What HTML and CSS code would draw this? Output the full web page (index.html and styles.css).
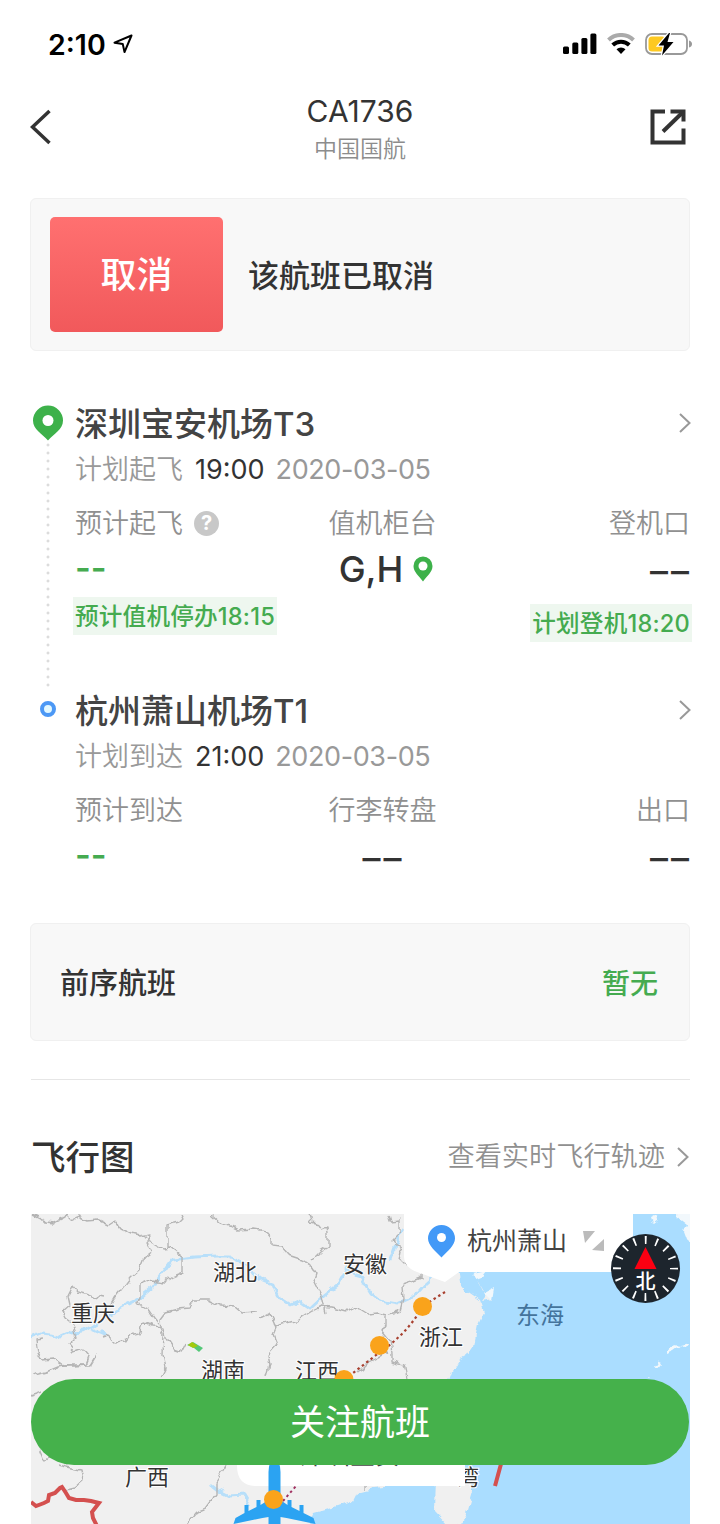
FILE: index.html
```html
<!DOCTYPE html>
<html lang="zh-CN">
<head>
    <meta charset="UTF-8">
    <meta name="viewport" content="width=device-width, initial-scale=1.0">
    <title>CA1736 中国国航</title>
    <link rel="stylesheet" href="styles.css">
</head>
<body>
    <div class="status-bar">
        <div class="status-left">
            <span class="time">2:10</span>
            <svg width="20" height="20" viewBox="0 0 20 20" fill="none" stroke="#000" stroke-width="2" stroke-linejoin="round"><path d="M18.5 1.5 1.5 8.7l8.3 1.4 1.7 8z"/></svg>
        </div>
        <div class="status-right">
            <svg width="34" height="22" viewBox="0 0 34 22"><rect x="0" y="13.500" width="6" height="7.500" rx="1.500"/><rect x="9.300" y="9.500" width="6" height="11.500" rx="1.500"/><rect x="18.400" y="5" width="6" height="16" rx="1.500"/><rect x="27.400" y="0.500" width="6" height="20.500" rx="1.500"/></svg>
            <svg width="28" height="22" viewBox="0 0 28 22" fill="none"><path d="M1.500 7a18 18 0 0 1 25 0" stroke="#aaa" stroke-width="4"/><path d="M5.700 12a12 12 0 0 1 16.600 0" stroke="#000" stroke-width="4"/><path d="M9.500 16.300a6.500 6.500 0 0 1 9 0L14 21z" fill="#000"/></svg>
            <svg width="47" height="24" viewBox="0 0 47 24"><rect x="1" y="2" width="41" height="20" rx="6" fill="#fff" stroke="#999" stroke-width="1.800"/><path d="M44 8.500q3 1 3 3.500t-3 3.500z" fill="#999"/><rect x="3.500" y="4.500" width="17" height="15" rx="3.500" fill="#fdc921"/><path d="M24 1 13.500 13.500H19L17 23.500 28.500 10H22.500L25 1z" fill="#000" stroke="#fff" stroke-width="2.500" paint-order="stroke"/></svg>
        </div>
    </div>

    <header class="nav">
        <svg class="back" width="22" height="36" viewBox="0 0 22 36" fill="none" stroke="#333" stroke-width="3.500"><path d="M19.500 2 2.500 18l17 16"/></svg>
        <div class="nav-title">
            <h1>CA1736</h1>
            <p>中国国航</p>
        </div>
        <svg class="share" width="36" height="36" viewBox="0 0 36 36" fill="none" stroke="#333" stroke-width="4"><path d="M15 2.500H2.500v31h31V19.500"/><path d="M13 22.500 32 4"/><path d="M20.500 2.500h13V12.500"/></svg>
    </header>

    <main>
        <section class="card notice">
            <div class="badge">取消</div>
            <p>该航班已取消</p>
        </section>

        <section class="leg depart">
            <div class="marker">
                <svg width="32" height="36" viewBox="0 0 32 36"><path d="M16 0.500A15 15 0 0 0 1 15.500c0 9 9 13 15 20 6-7 15-11 15-20A15 15 0 0 0 16 0.500z" fill="#3db14a"/><circle cx="16" cy="15.500" r="5.500" fill="#fff"/></svg>
                <span class="dots"></span>
            </div>
            <div class="leg-body">
                <div class="airport">
                    <h2>深圳宝安机场T3</h2>
                    <svg class="chevron" width="14" height="20" viewBox="0 0 14 20"><path d="M2 1l9.500 9L2 19"/></svg>
                </div>
                <div class="schedule"><span>计划起飞</span><b>19:00</b><span class="date">2020-03-05</span></div>
                <div class="info">
                    <div class="cell">
                        <div class="label">预计起飞 <span class="help">?</span></div>
                        <div class="value dash-green">--</div>
                        <span class="tag">预计值机停办18:15</span>
                    </div>
                    <div class="cell center">
                        <div class="label">值机柜台</div>
                        <div class="value counter">G,H
                            <svg width="20" height="26" viewBox="0 0 20 26"><path d="M10 0.500A9.500 9.500 0 0 0 0.500 10C0.500 16 6 20 10 25.500 14 20 19.500 16 19.500 10A9.500 9.500 0 0 0 10 0.500z" fill="#3db14a"/><circle cx="10" cy="10" r="4.500" fill="#fff"/></svg>
                        </div>
                    </div>
                    <div class="cell right">
                        <div class="label">登机口</div>
                        <div class="value dash">––</div>
                        <span class="tag low">计划登机18:20</span>
                    </div>
                </div>
            </div>
        </section>

        <section class="leg arrive">
            <div class="marker"><span class="ring"></span></div>
            <div class="leg-body">
                <div class="airport">
                    <h2>杭州萧山机场T1</h2>
                    <svg class="chevron" width="14" height="20" viewBox="0 0 14 20"><path d="M2 1l9.500 9L2 19"/></svg>
                </div>
                <div class="schedule"><span>计划到达</span><b>21:00</b><span class="date">2020-03-05</span></div>
                <div class="info">
                    <div class="cell">
                        <div class="label">预计到达</div>
                        <div class="value dash-green">--</div>
                    </div>
                    <div class="cell center">
                        <div class="label">行李转盘</div>
                        <div class="value dash">––</div>
                    </div>
                    <div class="cell right">
                        <div class="label">出口</div>
                        <div class="value dash">––</div>
                    </div>
                </div>
            </div>
        </section>

        <section class="card previous">
            <span>前序航班</span>
            <span class="none">暂无</span>
        </section>

        <section class="map-section">
            <div class="map-head">
                <h3>飞行图</h3>
                <div class="more">查看实时飞行轨迹
                    <svg class="chevron" width="14" height="20" viewBox="0 0 14 20"><path d="M2 1l9.500 9L2 19"/></svg>
                </div>
            </div>
            <svg class="map" width="659" height="310" viewBox="31 1214 659 310">
                <!-- roughens coast and border lines -->
                <filter id="rough" filterUnits="userSpaceOnUse" x="25" y="1204" width="675" height="330">
                    <feTurbulence type="fractalNoise" baseFrequency="0.1" numOctaves="2" seed="4"/>
                    <feDisplacementMap in="SourceGraphic" scale="8" xChannelSelector="R" yChannelSelector="G"/>
                </filter>
                <rect x="31" y="1214" width="659" height="310" fill="#f0f0f0"/>
                <g filter="url(#rough)">
                    <!-- sea -->
                    <path fill="#aaddff" d="M458 1268l2 14 7 9 13 9 4 12-6 13-4 20-7 10-8 5-7 12-3 8-20 40-20 40-15 26-20 2-16 4-4 8-14 5-12 4-14 4-4 9-4 20h426V1190H620z"/>
                    <path fill="#f0f0f0" d="M478 1280l6 12 4 2-6 8 10-2-6-6zM435 1476l33 0 5 16-7 24-9 13-4 9h-3l-3-12-13-14z"/>
                    <g fill="#f2f8fc">
                        <path d="M650 1218l6-3 1 5-5 4zM678 1204h26v44l-18-8-3-8 3-8-9-7zM666 1351l8-7 7 1-8 6-7 3zM680 1344l8-2-4 5zM658 1360l2 4-4 5-2-3zM648 1375l3 1-4 1zM484 1293l9-5-2 12zM472 1274l14-3-6 8z"/>
                    </g>
                    <!-- rivers -->
                    <g class="river">
                        <path d="M21 1341l21-8 10 1 8 3 12-5 12-1 15-9 20-13 20-10 15-13 8-12 10-14 22-3 22-1 12 0 20 9 6 9 6 5 12 5 5 12 14 9 9-4 10 7 14-13 14-11 8-15 8 6 7 2 10 16 10 8 16 3 18-8 10-12 11-10 14-10 4-7"/>
                        <path d="M390 1260l8-22 6-8M91 1329l16 7-5-6M210 1484l8 6 12 6 14-1 6 10"/>
                    </g>
                    <!-- province borders -->
                    <g class="border">
                        <path d="M33 1215l12 6 10 1 8-4 2-4 6 6 7-3 9 4 12-1 10 5 6-4 6 8 10 5 8 2 10-2-1 9 4 8-8 6-5 13-9 8-6 8-9 12-5 9"/>
                        <path d="M139 1234l24 14 7-1 13 10v15l-10 4-8 6-13-2-12 5 0 12-2 6 9 5 7 10 5 6M168 1248v-22l11-3 4-4-2-4M211 1215l9 8 10 3 8 4 16-1 12 2 6 7 0 8 8 1 8 9 12 4 12 8 4 6-2 6 8 16 4 17"/>
                        <path d="M309 1214l2 8 8 2 3 4 5-2 1 8v12l-8 5-9 9M388 1214l2 7 10-1 0 14-8 8 10 8-2 10 5 5"/>
                        <path d="M103 1298l-10-2-8-3-8-2-4-5-5 10 2 9-8 7 3 6 8 6 4 12-9 9 6 7 8-3 7 8-3 8-12 1-10 0-10-7-12 1-4-8-2-12 8-1"/>
                        <path d="M102 1338l6-2 8 7 8-1 5-7 10-2 4-11 9 4 12 1 2 10 8 12 9 3 4-8M161 1378l4-8-3-16 1-20-3-14 6-8 12-3 12-1 5-8 14 0 12 6 14 1 8 7 12-1M31 1376l15-4 12-5 14-2 18 0 6-10"/>
                        <path d="M260 1318l10-5 4 8 2 7-3 7 4 10-9 10 2 10-3 12M276 1326l23-6 14-9 8-4 10 1 16 4M347 1312l5-5 8 2 8 5 10-1 8 2 0 10-4 6 8 10 2 12 0 8 12 3 4 20 7 3 16-5 8 8M388 1314l12-3 3-12-1-14 9-3 10-4 0-8 8-1 4-8M388 1352l-20 10-10 10"/>
                        <path d="M31 1396l12-4M40 1448l5 12 8-6M57 1465l14 3 10 2 2 11-8 7-8 2M365 1486v3"/>
                        <path d="M226 1466l-5 8-5 8 0 12-12 16-10 4-8 10"/>
                    </g>
                </g>
                <path class="frontier" d="M31 1502l5 4 8-3 4-2 1-6 6-2 5-5 2-1 4 6 3 5 7 2 8 0 7 1 8 2-7 9 1 6 4 8M501 1464l-6 22"/>
                <path d="M187 1345l6-3 10 6-4 4-5-4z" fill="#54c878"/><path d="M188 1345l4-3 6 4-5 2z" fill="#a5c90b"/>
                <!-- labels -->
                <g class="place">
                    <text x="71" y="1321">重庆</text>
                    <text x="213" y="1280">湖北</text>
                    <text x="343" y="1272">安徽</text>
                    <text x="201" y="1378">湖南</text>
                    <text x="295" y="1379">江西</text>
                    <text x="419" y="1345">浙江</text>
                    <text x="125" y="1485">广西</text>
                    <text x="457" y="1485">湾</text>
                </g>
                <text class="sea-name" x="516" y="1324">东海</text>
                <!-- destination bubble -->
                <path d="M404 1214h229v58H459l-14 10-28-10q-13-5-13-16z" fill="#fff"/>
                <path d="M441.500 1225a13.500 13.500 0 0 0-13.500 13.500c0 7 8 13 13.500 19 5.500-6 13.500-12 13.500-19a13.500 13.500 0 0 0-13.500-13.500z" fill="#4299f7"/><circle cx="441.500" cy="1237.500" r="4.500" fill="#fff"/>
                <text class="bubble-text" x="467" y="1250">杭州萧山</text>
                <path d="M583 1231h12l-10 12zM604 1239v12l-12-1z" fill="#bbb"/>
                <!-- origin bubble -->
                <path d="M237 1440h228v46H255q-18-1-18-20z" fill="#fff"/>
                <text class="bubble-text" x="300" y="1464">深圳宝安</text>
                <!-- flight path -->
                <path class="track" d="M445 1292l-22 14Q407 1334 380 1352L344 1380"/>
                <g fill="#faa31b"><circle cx="422.500" cy="1306.500" r="9.500"/><circle cx="379.500" cy="1345.500" r="9.500"/><circle cx="344" cy="1379.500" r="9.500"/></g>
                <path d="M274.500 1458q6 4 6 14v28l7 5v-5h4v7l8 4v-6h4v8l10 5 2 6-29-6-6-1v21h-12v-21l-6 1-29 6 2-6 9-5v-8h4v6l8-4v-7h4v5l8-5v-28q0-10 6-14z" fill="#2ba3f2"/>
                <path d="M283 1501l13-15" stroke="#a03060" stroke-width="2" stroke-dasharray="2.500 3"/>
                <circle cx="273.500" cy="1499.500" r="9.500" fill="#faa31b"/>
                <!-- compass -->
                <circle cx="645.500" cy="1268.500" r="34.500" fill="#1d252d"/>
                <circle cx="645.500" cy="1268.500" r="28.500" fill="none" stroke="#fff" stroke-width="8" stroke-dasharray="1.800 9.392" stroke-dashoffset="0.900"/>
                <path d="M645.500 1247l11 22h-22z" fill="#fb0012"/>
                <text class="north" x="635.500" y="1289">北</text>
            </svg>
        </section>
    </main>

    <button class="follow">关注航班</button>
</body>
</html>
```
FILE: styles.css
```css
* {
    box-sizing: border-box;
    margin: 0;
    padding: 0;
}
body {
    height: 1524px;
    overflow: hidden;
    background: #fff;
    color: #333;
    font-family: Inter, "Noto Sans CJK SC", sans-serif;
    line-height: 46px;
}
svg {
    display: block;
    flex: none;
}
.status-bar {
    display: flex;
    justify-content: space-between;
    align-items: center;
    height: 88px;
    padding: 0 28px 0 48px;
}
.status-left {
    display: flex;
    align-items: center;
    gap: 7px;
}
.time {
    padding-top: 1px;
    font-size: 28.5px;
    font-weight: 600;
    color: #000;
}
.status-right {
    display: flex;
    align-items: center;
    gap: 10px;
}
.nav {
    display: flex;
    justify-content: space-between;
    align-items: center;
    height: 78px;
    padding: 0 34px 0 30px;
}
.back {
    margin-right: 18px;
}
.nav-title {
    padding-top: 2px;
    text-align: center;
}
.nav-title h1 {
    font-size: 30px;
    font-weight: 400;
    line-height: 43px;
}
.nav-title p {
    font-size: 23px;
    font-weight: 350;
    line-height: 33px;
    color: #8c8c8c;
}
main {
    padding: 32px 30px 0;
}
.card {
    display: flex;
    align-items: center;
    background: #f8f8f8;
    border: 1px solid #f0f0f0;
    border-radius: 6px;
}
.notice {
    height: 153px;
    padding-left: 19px;
    margin-bottom: 49px;
}
.badge {
    width: 173px;
    height: 115px;
    margin-right: 25px;
    border-radius: 5px;
    background: linear-gradient(#ff7070, #f1595b);
    color: #fff;
    font-size: 36px;
    font-weight: 500;
    line-height: 117px;
    text-align: center;
}
.notice p {
    padding-top: 3px;
    font-size: 31px;
    font-weight: 500;
}
.leg {
    display: flex;
}
.depart {
    height: 287px;
}
.arrive {
    height: 236px;
}
.marker {
    display: flex;
    flex-direction: column;
    align-items: center;
    width: 36px;
    margin-right: 9px;
    padding-top: 5px;
}
.dots {
    flex: 1;
    width: 4px;
    background: radial-gradient(circle, #dcdcdc 1.1px, transparent 1.8px) 0 0 / 4px 8px;
}
.ring {
    width: 16px;
    height: 16px;
    margin-top: 9px;
    border: 4px solid #4c98f5;
    border-radius: 50%;
    background: #e2f8ff;
}
.leg-body {
    flex: 1;
}
.airport {
    display: flex;
    justify-content: space-between;
    align-items: center;
    height: 46px;
    margin-right: -2px;
}
.airport h2 {
    padding-top: 2px;
    font-size: 33px;
    font-weight: 500;
    color: #444;
}
.chevron {
    fill: none;
    stroke: #999;
    stroke-width: 2;
}
.schedule {
    display: flex;
    gap: 11px;
    padding-top: 1px;
    font-size: 27px;
    font-weight: 350;
    line-height: 46px;
    color: #999;
}
.schedule span:first-child {
    margin-right: 1px;
}
.schedule b {
    font-weight: 400;
    color: #333;
}
.date {
    font-weight: 400;
    letter-spacing: -0.4px;
}
.info {
    display: grid;
    grid-template-columns: 1fr auto 1fr;
    margin-top: 7px;
}
.cell {
    display: flex;
    flex-direction: column;
    align-items: flex-start;
}
.center {
    align-items: center;
}
.right {
    align-items: flex-end;
}
.label {
    display: flex;
    align-items: center;
    gap: 11px;
    height: 46px;
    font-size: 27px;
    font-weight: 350;
    line-height: 49px;
    color: #909090;
}
.help {
    width: 25px;
    height: 25px;
    border-radius: 50%;
    background: #c8c8c8;
    color: #fff;
    font-size: 20px;
    font-weight: 700;
    line-height: 25px;
    text-align: center;
}
.value {
    height: 46px;
    font-size: 36px;
    line-height: 46px;
}
.dash {
    margin-right: -2px;
    font-weight: 500;
    letter-spacing: 3px;
    line-height: 50px;
}
.dash-green {
    color: #45ab50;
    font-size: 34px;
    font-weight: 600;
    line-height: 43px;
}
.counter {
    display: flex;
    align-items: center;
    gap: 10px;
    padding-left: 7px;
    font-weight: 500;
}
.tag {
    height: 38px;
    margin: 5px 0 0 -2px;
    padding: 0 2px;
    background: #eef7ef;
    color: #45ab50;
    font-size: 23.6px;
    font-weight: 500;
    letter-spacing: 0.2px;
    line-height: 40px;
    white-space: nowrap;
}
.low {
    margin: 12px -2px 0 0;
}
.previous {
    justify-content: space-between;
    height: 118px;
    padding: 3px 31px 0 29px;
    font-size: 29px;
    font-weight: 500;
}
.none {
    color: #45ab50;
    font-size: 28px;
}
.map-section {
    margin: 38px 0 0 1px;
    border-top: 1px solid #e6e6e6;
}
.map-head {
    display: flex;
    justify-content: space-between;
    align-items: center;
    height: 134px;
    padding-top: 20px;
}
.map-head h3 {
    padding-top: 2px;
    font-size: 34.5px;
    font-weight: 500;
}
.more {
    display: flex;
    align-items: center;
    gap: 11px;
    font-size: 27.2px;
    font-weight: 350;
    line-height: 48px;
    color: #909090;
}
.map {
    width: 659px;
    height: 310px;
}
.river {
    fill: none;
    stroke: #b7dffa;
    stroke-width: 2.8;
}
.border {
    fill: none;
    stroke: #b4b4b4;
    stroke-width: 1.4;
    stroke-linejoin: round;
}
.frontier {
    fill: none;
    stroke: #d4504f;
    stroke-width: 4;
}
.place {
    fill: #333;
    stroke: #fff;
    stroke-width: 2;
    paint-order: stroke;
    font-size: 22px;
}
.sea-name {
    fill: #44749c;
    font-size: 24px;
}
.bubble-text {
    fill: #444;
    font-size: 25px;
}
.track {
    fill: none;
    stroke: #a8402f;
    stroke-width: 2.2;
    stroke-dasharray: 2.5 3;
}
.north {
    fill: #fff;
    font-size: 20px;
    font-weight: 500;
}
/* stays above the page at the bottom */
.follow {
    position: fixed;
    left: 31px;
    top: 1379px;
    width: 658px;
    height: 86px;
    border: none;
    border-radius: 43px;
    background: #45b14b;
    color: #fff;
    font-family: inherit;
    font-size: 35px;
    line-height: 84px;
}
```
